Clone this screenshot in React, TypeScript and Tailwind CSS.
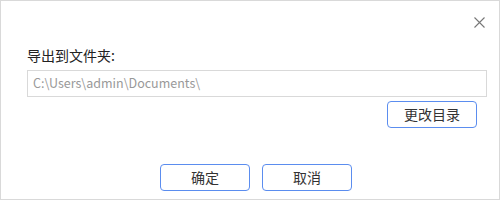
import React from 'react';

export default function App() {
  return (
    <div
      className="w-[500px] h-[200px] bg-white border border-[#d9d9d9] flex flex-col text-[#333]"
      style={{ fontFamily: '"Noto Sans CJK SC", "Noto Sans", sans-serif' }}
    >
      <div className="flex justify-end pt-[15px] pr-[14px] h-[44px]">
        <button className="w-[12px] h-[12px] flex items-center justify-center text-[#666]">
          <svg width="11" height="11" viewBox="0 0 11 11" fill="none" stroke="#777" strokeWidth="1.1">
            <path d="M0.5 0.5 L10.5 10.5 M10.5 0.5 L0.5 10.5" />
          </svg>
        </button>
      </div>
      <div className="pl-[26px] pr-[12px]">
        <div className="text-[14px] leading-[20px] text-[#222] mb-[5px]">导出到文件夹:</div>
        <div className="h-[27px] border border-[#d9d9d9] flex items-center px-[5px] text-[12.5px] text-[#999]">
          C:\Users\admin\Documents\
        </div>
        <div className="flex justify-end mt-[4px] pr-[10px]">
          <button className="w-[90px] h-[27px] border border-[#5b8def] rounded-[4px] text-[14px] text-[#333] flex items-center justify-center">
            更改目录
          </button>
        </div>
      </div>
      <div className="flex justify-center gap-[12px] mt-[36px] pl-[12px]">
        <button className="w-[90px] h-[27px] border border-[#5b8def] rounded-[4px] text-[14px] text-[#333] flex items-center justify-center">
          确定
        </button>
        <button className="w-[90px] h-[27px] border border-[#5b8def] rounded-[4px] text-[14px] text-[#333] flex items-center justify-center">
          取消
        </button>
      </div>
    </div>
  );
}
